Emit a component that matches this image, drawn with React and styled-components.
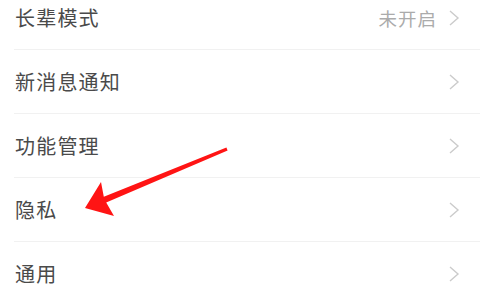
import React from "react";
import styled, { createGlobalStyle } from "styled-components";

const GlobalStyle = createGlobalStyle`
  html, body {
    margin: 0;
    padding: 0;
    background: #fff;
    overflow: hidden;
  }
  body {
    font-family: "Noto Sans CJK SC", "Noto Sans", sans-serif;
  }
`;

const Screen = styled.div`
  position: relative;
  width: 480px;
  height: 300px;
  overflow: hidden;
  background: #fff;
`;

// the page is scrolled a little, so the first row is cut off at the top
const List = styled.div`
  margin-top: -14px;
  padding-left: 14px;
`;

const Row = styled.div`
  height: 63px;
  display: flex;
  align-items: center;
  justify-content: space-between;
  padding-right: 20px;
  border-bottom: ${(p) => (p.$last ? "none" : "1px solid #f1f1f1")};
`;

const Label = styled.span`
  font-size: 20px;
  letter-spacing: 1.2px;
  color: #4a4a4a;
  padding-left: 1px;
`;

const Right = styled.div`
  display: flex;
  align-items: center;
  gap: 11px;
`;

const Value = styled.span`
  font-size: 18.5px;
  letter-spacing: 1px;
  color: #ababab;
`;

const Chevron = () => (
  <svg width="12" height="16" viewBox="0 0 12 16">
    <path d="M2 1 L10 8 L2 15" fill="none" stroke="#cbcbcb" strokeWidth="1.4" />
  </svg>
);

const Arrow = styled.svg`
  position: absolute;
  left: 0;
  top: 0;
  pointer-events: none;
`;

const items = [
  { label: "长辈模式", value: "未开启" },
  { label: "新消息通知" },
  { label: "功能管理" },
  { label: "隐私" },
  { label: "通用" },
];

export default function App() {
  return (
    <>
      <GlobalStyle />
      <Screen>
        <List>
          {items.map((it, i) => (
            <Row key={it.label} $last={i === items.length - 1}>
              <Label>{it.label}</Label>
              <Right>
                {it.value && <Value>{it.value}</Value>}
                <Chevron />
              </Right>
            </Row>
          ))}
        </List>
        <Arrow width="480" height="300" viewBox="0 0 480 300">
          <path
            d="M226.4 147.6 L227.6 150.4 L106.2 202.4 L114 216 L85 208 L101 182 L103.8 196.8 Z"
            fill="#ff1414"
          />
        </Arrow>
      </Screen>
    </>
  );
}
